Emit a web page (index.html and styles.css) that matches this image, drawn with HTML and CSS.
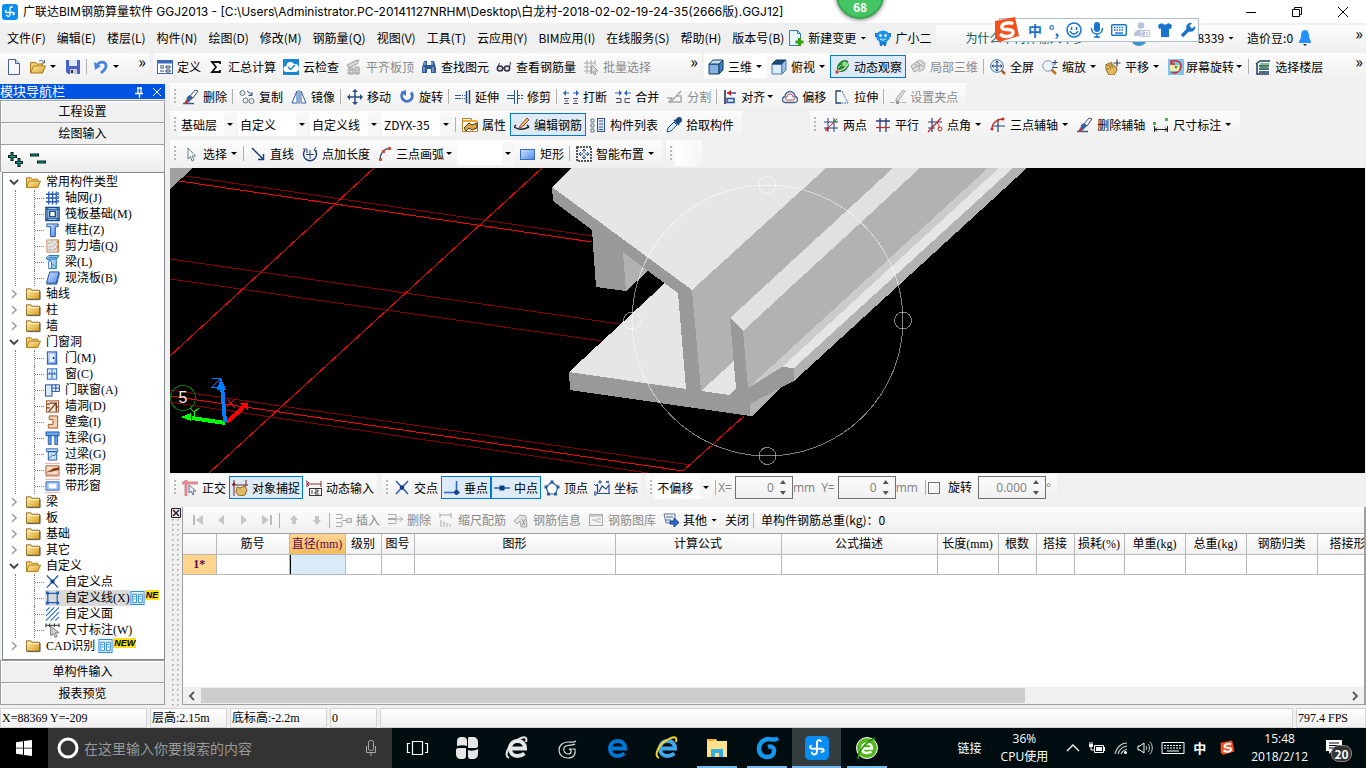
FILE: index.html
```html
<!DOCTYPE html>
<html lang="zh">
<head>
    <meta charset="UTF-8">
    <meta name="viewport" content="width=device-width, initial-scale=1.0">
    <title>广联达BIM钢筋算量软件 GGJ2013</title>
    <link rel="stylesheet" href="styles.css">
</head>
<body>
    <!-- 图标库 -->
    <svg class="sprite" aria-hidden="true">
        <defs>
            <linearGradient id="gold" x1="0" y1="0" x2="1" y2="1"><stop offset="0" stop-color="#fff3b0"/><stop offset="1" stop-color="#d99a1c"/></linearGradient>
            <linearGradient id="sky" x1="0" y1="0" x2="1" y2="1"><stop offset="0" stop-color="#cfe4ff"/><stop offset="1" stop-color="#4f8ae8"/></linearGradient>
        </defs>
        <symbol id="logo" viewBox="0 0 16 16"><rect width="16" height="16" rx="3" fill="#0a8df0"/><path d="M10.500 4c0-2-2.500-1.500-2.500.5V10c0 3-3.500 3-3.500.5M4.500 6.500c-1.500 0-1.500 2 .5 2h6c2 0 2 2.500-.5 2" fill="none" stroke="#fff" stroke-width="1.300"/></symbol>
        <symbol id="file" viewBox="0 0 16 16"><path d="M2.500.5h7l4 4v11h-11z" fill="#f4f8fd" stroke="#44628c"/><path d="M9.500.5v4h4" fill="#c9dcf2" stroke="#44628c"/></symbol>
        <symbol id="fopen" viewBox="0 0 16 16"><path d="M.5 14V3.500h5l1 1.500h6v2" fill="#f3d06a" stroke="#a87a1c"/><path d="M.5 14l3-7h12l-3 7z" fill="url(#gold)" stroke="#a87a1c"/></symbol>
        <symbol id="fclose" viewBox="0 0 16 16"><path d="M.5 13.500v-11h5l1 1.500h8v9.500z" fill="url(#gold)" stroke="#8a6a20"/><path d="M1 5.500h13" stroke="#fff6c8"/><path d="M1 14h14v-9" fill="none" stroke="#555"/></symbol>
        <symbol id="openarrow" viewBox="0 0 16 16"><use href="#fopen"/><path d="M9 2.500c2-2 4-1 5 1M14.500 1v3h-3" fill="none" stroke="#567"/></symbol>
        <symbol id="save" viewBox="0 0 16 16"><path d="M1 1h14v14H3l-2-2z" fill="#4a62c8"/><path d="M4 1h8v6H4z" fill="#dfe8fa"/><path d="M5 10h7v5H5z" fill="#c9cdd8"/><path d="M6 11h2v3H6z" fill="#334"/></symbol>
        <symbol id="undo" viewBox="0 0 16 16"><path d="M4 6c3-4 9-4 9 1 0 4-3 5-5 7" fill="none" stroke="#4a82dc" stroke-width="2.600"/><path d="M1 3l1 8 6-4z" fill="#4a82dc"/></symbol>
        <symbol id="define" viewBox="0 0 16 16"><rect x=".5" y="1.500" width="15" height="13" fill="#fff" stroke="#3d68b8"/><path d="M1 3h14" stroke="#3d68b8" stroke-width="3"/><path d="M3 7h4M3 9h4M3 12h4M9 7h4v2H9zM9 11h4v2H9z" fill="none" stroke="#33496e"/></symbol>
        <symbol id="sum" viewBox="0 0 16 16"><path d="M12 5V3H4l4 5-4 5h8v-2" fill="none" stroke="#111" stroke-width="1.800"/></symbol>
        <symbol id="cloud" viewBox="0 0 16 16"><rect width="16" height="16" fill="#1787d2"/><path d="M3.500 13a3 3 0 0 1 0-6 4 4 0 0 1 7.500-2 4 4 0 0 1 1.500 8z" fill="#fff"/><path d="M5 8l2.500 2.500L12 6" fill="none" stroke="#1787d2" stroke-width="1.500"/></symbol>
        <symbol id="align-top" viewBox="0 0 16 16"><path d="M1 6l8-4 4-1-2 4-8 4zM3 9h4v6H3zM9 8h4v7H9z" fill="#d8d8d8" stroke="#a0a0a0"/><path d="M1 11h13M1 14h13" stroke="#aaa"/></symbol>
        <symbol id="find" viewBox="0 0 16 16"><path d="M3 2h3v4h4V2h3l2 7v5h-5v-4H6v4H1V9z" fill="#2f5a96"/><path d="M3 8v5M12 8v5M4 3v3M11 3v3" stroke="#b9d3f3"/></symbol>
        <symbol id="glasses" viewBox="0 0 16 16"><ellipse cx="4" cy="9.500" rx="2.700" ry="2.500" fill="#dde" stroke="#334" stroke-width="1.500"/><ellipse cx="11" cy="9.500" rx="2.700" ry="2.500" fill="#dde" stroke="#334" stroke-width="1.500"/><path d="M6.500 9h2M1.500 9l2-5M13.500 9l1-6" stroke="#334" fill="none"/></symbol>
        <symbol id="batch" viewBox="0 0 16 16"><path d="M1 4h12M1 8h9M1 12h8M4 1v14M8 1v14M12 1v6" stroke="#aaa"/><path d="M9 6l6 6h-3l1 3-2 .5-1-3-2 2z" fill="#ddd" stroke="#999"/></symbol>
        <symbol id="cube" viewBox="0 0 16 16"><path d="M1 5h10v10H1z" fill="#7fb2e2" stroke="#163a5e"/><path d="M1 5l4-4h10l-4 4z" fill="#c4e0f8" stroke="#163a5e"/><path d="M11 5l4-4v10l-4 4z" fill="#3f7fbd" stroke="#163a5e"/></symbol>
        <symbol id="cube2" viewBox="0 0 16 16"><path d="M1 5h10v10H1z" fill="#dcebf8" stroke="#4676a8"/><path d="M1 5l4-4h10l-4 4z" fill="#1c4d80" stroke="#163a5e"/><path d="M11 5l4-4v10l-4 4z" fill="#9fc5e8" stroke="#4676a8"/></symbol>
        <symbol id="orbit" viewBox="0 0 16 16"><ellipse cx="9" cy="7" rx="7" ry="5" transform="rotate(-45 9 7)" fill="#23863a"/><path d="M0 10c5 4 13 0 15-8" fill="none" stroke="#e6d9c8" stroke-width="1.200"/><circle cx="10.500" cy="5" r="2.500" fill="#8fdc86"/><path d="M4 9l3-3" stroke="#bdf0b4"/><circle cx="3" cy="13" r="1.800" fill="#c64a3a"/></symbol>
        <symbol id="local3d" viewBox="0 0 16 16"><path d="M1 7l5-4 4 2-1 6-5 2zM6 3l4-2 5 3-1 6-5 3M2 10l8-4 5 2M4 5l5 2 4-3" fill="#ddd" stroke="#aaa"/></symbol>
        <symbol id="full" viewBox="0 0 16 16"><circle cx="7" cy="7" r="6.300" fill="#e6f0fb" stroke="#466da0"/><path d="M7 2v10M2 7h10M5.500 3.500L7 2l1.500 1.500M5.500 10.500L7 12l1.500-1.500M3.500 5.500L2 7l1.500 1.500M10.500 5.500L12 7l-1.500 1.500" fill="none" stroke="#1b3f7c"/><path d="M11.500 11.500L15 15" stroke="#a1602c" stroke-width="2.500"/></symbol>
        <symbol id="zoomi" viewBox="0 0 16 16"><circle cx="6" cy="7" r="5.300" fill="#eef4fb" stroke="#8898ac"/><path d="M9.500 10.500L14 15" stroke="#b5762e" stroke-width="2.500"/><path d="M13 1v5M10.500 3.500h5M10.500 8.500h5" stroke="#1b3f7c"/></symbol>
        <symbol id="pan" viewBox="0 0 16 16"><path d="M1 5l2 2V4l2 1 1-2 2 3 3 2 1 3-3 5H4l-3-5z" fill="#e2b860" stroke="#93702a"/><path d="M4 6l2 4M6 5l2 4M2 9l2 2" stroke="#93702a"/><path d="M12 .5v7M8.500 4h7" stroke="#345" stroke-width="1.200"/></symbol>
        <symbol id="screenrot" viewBox="0 0 16 16"><rect width="16" height="16" fill="#76c6ee"/><path d="M2 6h9v6H2z" fill="#f3eda3"/><path d="M3 4c3-4 11-2 10 4s-7 7-10 5M3 1v4h4" fill="none" stroke="#d8232e" stroke-width="1.400"/><circle cx="8" cy="8" r="1.500" fill="#46a546"/></symbol>
        <symbol id="floors" viewBox="0 0 16 16"><path d="M1 5l4-3h10M4 7h10M4 10h10M4 13h10M2 5v10h12" fill="none" stroke="#1d3e5c" stroke-width="1.500"/><path d="M5 5h9M5 8.500h8" stroke="#55b060" stroke-width="1.500"/></symbol>
        <symbol id="erase" viewBox="0 0 16 16"><path d="M0 14.500h11" stroke="#38618f" stroke-width="1.500"/><path d="M12 1l3 1-5 7-3-2z" fill="#f4f4f8" stroke="#3b5478"/><path d="M4 8l3-2 3 3-4 4H3z" fill="#376398"/><path d="M3 11l3 2-2 1.500H1z" fill="#c23b3b"/></symbol>
        <symbol id="copy" viewBox="0 0 16 16"><circle cx="3.500" cy="4" r="2.500" fill="#eee" stroke="#678"/><circle cx="6.500" cy="11.500" r="2.500" fill="#eee" stroke="#678"/><circle cx="12.500" cy="12" r="2.500" fill="#eee" stroke="#678"/><path d="M8 2l5 4M13 3v3.500H9.500" stroke="#2a4f90" fill="none"/></symbol>
        <symbol id="mirror" viewBox="0 0 16 16"><path d="M6 2v12H1zM10 2v12h5z" fill="#fff" stroke="#2e5fa8"/><path d="M8 1v14" stroke="#2e5fa8"/></symbol>
        <symbol id="move" viewBox="0 0 16 16"><path d="M8 1v14M1 8h14" stroke="#2b4c7e" stroke-width="1.500"/><path d="M8 0l3 3H5zM8 16l3-3H5zM0 8l3-3v6zM16 8l-3-3v6z" fill="#2b4c7e"/></symbol>
        <symbol id="rotate" viewBox="0 0 16 16"><path d="M4 3.500a5.300 5.300 0 1 0 8 0" fill="none" stroke="#3f72c8" stroke-width="2.800"/><path d="M7 1v6L1.500 3z" fill="#3f72c8"/></symbol>
        <symbol id="extend" viewBox="0 0 16 16"><path d="M0 6.500h10M0 9.500h10" stroke="#2a56a0" stroke-dasharray="6 1 1 1"/><path d="M11.500 2v12M14.500 1v14" stroke="#27456e" stroke-width="1.500"/></symbol>
        <symbol id="trim" viewBox="0 0 16 16"><path d="M0 6.500h7M0 9.500h7M7.500 1v14M10.500 1v14" stroke="#27568e"/><path d="M11 6.500h5M11 9.500h5" stroke="#27568e" stroke-dasharray="2 1"/></symbol>
        <symbol id="break" viewBox="0 0 16 16"><path d="M1 4h5M10 4h5" stroke="#2d65bd"/><path d="M0 4l3-3v6zM16 4l-3-3v6z" fill="#2d65bd"/><path d="M1 9.500h5M10 9.500h5M1 14.500h5M10 14.500h5M2 12h3M11 12h3" fill="none" stroke="#446"/></symbol>
        <symbol id="merge" viewBox="0 0 16 16"><path d="M0 4h5M11 4h5" stroke="#2d65bd"/><path d="M7 4L4 1v6zM9 4l3-3v6z" fill="#2d65bd"/><path d="M1 9.500h5v4H1M15 9.500h-5v4h5" fill="none" stroke="#446"/></symbol>
        <symbol id="split" viewBox="0 0 16 16"><path d="M0 9h5l-3 4h12V7h-4M3 14l11-12" fill="none" stroke="#aaa" stroke-width="1.500"/></symbol>
        <symbol id="alignl" viewBox="0 0 16 16"><path d="M2 1v14" stroke="#224" stroke-width="1.500"/><path d="M4 4h9" stroke="#2453c2" stroke-width="1.500"/><path d="M4 4l4-3v6z" fill="#c6222e"/><path d="M4 9.500h7v4H4z" fill="#dce6f7" stroke="#2453a2" stroke-width="1.500"/></symbol>
        <symbol id="offset" viewBox="0 0 16 16"><path d="M4 13.500a3 3 0 0 1-1-6 5 5 0 0 1 10 0 3 3 0 0 1-1 6z" fill="#e8eef6" stroke="#41618c" stroke-width="1.300"/><path d="M5 11a1.500 1.500 0 0 1 0-3 3 3 0 0 1 6 0 1.500 1.500 0 0 1 0 3z" fill="#fff" stroke="#ce4c4c"/></symbol>
        <symbol id="stretch" viewBox="0 0 16 16"><path d="M7 2H2v12h5" fill="none" stroke="#26456e" stroke-width="1.300"/><path d="M8 2l6 12H6" fill="none" stroke="#3a67b0" stroke-dasharray="2 1"/></symbol>
        <symbol id="grip" viewBox="0 0 16 16"><path d="M0 13.500h16" stroke="#aaa" stroke-dasharray="5 1"/><path d="M6 10l7-9 2 1-6 9-3 1z" fill="#ddd" stroke="#aaa"/><path d="M6 12h3v3H6z" fill="#999"/></symbol>
        <symbol id="prop" viewBox="0 0 16 16"><path d="M.5 1.500h9v3h6v10H.5z" fill="#fff" stroke="#b08030"/><path d="M1 4h14" stroke="#eba93a" stroke-width="2"/><path d="M2 11l5-5 3 2 5-2v5l-5 2-3-2-3 3z" fill="#dca744" stroke="#44320f"/></symbol>
        <symbol id="editbar" viewBox="0 0 16 16"><path d="M0 10l2-2M0 10c4 3 9 3 15 0M15 10l-2-2" fill="none" stroke="#222" stroke-width="1.400"/><path d="M6 9l7-8 2 2-7 7-3 1z" fill="#f0c060" stroke="#a44"/></symbol>
        <symbol id="complist" viewBox="0 0 16 16"><path d="M1 2h3v3H1zM1 7h3v3H1zM1 12h3v3H1z" fill="#fff" stroke="#577"/><rect x="7.500" y="1.500" width="7" height="13" fill="#e8f0fb" stroke="#2a4f8f"/><path d="M9 4h4M9 7h4M9 10h4M9 12.500h4" stroke="#2a4f8f"/></symbol>
        <symbol id="picker" viewBox="0 0 16 16"><path d="M1 15l1-4 6-6 3 3-6 6z" fill="#d5e8fb" stroke="#254f88"/><path d="M8 3l5 5M9 4l3-3c2-1 4 1 3 3l-3 3z" fill="#1e477e" stroke="#1e477e" stroke-width="1.500"/></symbol>
        <symbol id="axis2" viewBox="0 0 16 16"><path d="M5 1v14M11 1v14M1 5h14M1 11h14" stroke="#283c80"/><path d="M2 14L14 2" stroke="#c02828"/><circle cx="4" cy="12" r="1.500" fill="#c02828"/><circle cx="12" cy="4" r="1.500" fill="#38a038"/></symbol>
        <symbol id="axisp" viewBox="0 0 16 16"><path d="M5 1v14M11 1v14M1 4h14" stroke="#283c80" stroke-width="1.300"/><path d="M1 10.500h14" stroke="#c03030" stroke-width="1.300"/></symbol>
        <symbol id="axisa" viewBox="0 0 16 16"><path d="M5 1v14M1 5h14M1 11h7" stroke="#283c80" stroke-width="1.200"/><path d="M1 15L14 1" stroke="#c02828" stroke-width="1.200"/><path d="M10 6c3 2 2 5 1 6" fill="none" stroke="#c02828"/><circle cx="13" cy="12" r="2" fill="none" stroke="#c02828"/></symbol>
        <symbol id="axis3" viewBox="0 0 16 16"><path d="M8 2v13M2 9h13" stroke="#283c80" stroke-width="1.200"/><path d="M2 12C2 6 7 2 13 2" fill="none" stroke="#c02828" stroke-width="1.300"/><circle cx="2" cy="12" r="1.500" fill="#c02828"/><circle cx="13" cy="2" r="1.500" fill="#c02828"/></symbol>
        <symbol id="dim" viewBox="0 0 16 16"><path d="M1.500 9v6M14.500 9v6M2 12.500h12M4 10.500l-2 2 2 2M12 10.500l2 2-2 2" fill="none" stroke="#222"/><path d="M0 5h3v3H0zM12 1h3v3h-3z" fill="#49b358"/></symbol>
        <symbol id="cursor" viewBox="0 0 16 16"><path d="M5 2v11l2.500-2.500L9 15l2-1-2-4h3.500z" fill="#fff" stroke="#68788c"/></symbol>
        <symbol id="line" viewBox="0 0 16 16"><path d="M2 2l11 11M13.500 8v5.500H8" fill="none" stroke="#1f3f7c" stroke-width="1.500"/></symbol>
        <symbol id="ptlen" viewBox="0 0 16 16"><path d="M3 4a6.500 6.500 0 1 0 10 0" fill="none" stroke="#25467c" stroke-width="1.500"/><path d="M8 4v9M4 8.500h8M1 3h4v4M14 1l-2 3 3 1" fill="none" stroke="#25467c"/></symbol>
        <symbol id="arc3" viewBox="0 0 16 16"><path d="M2 14C2 7 6 3 12 2" fill="none" stroke="#34558c" stroke-width="1.400"/><path d="M1 12h3v3H1zM4 4h3v3H4zM10 1h3v3h-3z" fill="#d0503c"/></symbol>
        <symbol id="rect" viewBox="0 0 16 16"><rect x=".5" y="3.500" width="14" height="10" fill="url(#sky)" stroke="#3b6cc0"/></symbol>
        <symbol id="smart" viewBox="0 0 16 16"><rect x="1" y="1" width="14" height="14" fill="none" stroke="#222" stroke-width="1.500" stroke-dasharray="2 1"/><path d="M8 3v4M8 9v4M3 8h4M9 8h4M6 5l2-2 2 2M6 11l2 2 2-2M5 6L3 8l2 2M11 6l2 2-2 2" fill="none" stroke="#29508c"/></symbol>
        <symbol id="ortho" viewBox="0 0 16 16"><path d="M0 3h16M4 0v16" stroke="#dc8c90" stroke-width="3"/><path d="M7 5v8l2-2 2 4 1-1-1-3h3z" fill="#eef" stroke="#678"/></symbol>
        <symbol id="snap" viewBox="0 0 16 16"><path d="M2 0v16M0 5h16M14 0v6" stroke="#722" /><path d="M0 5l2-3 2 3z" fill="#722"/><path d="M5 7l3 1 5-2 2 4-2 5-6 1-3-4z" fill="#e0bb60" stroke="#8a6c28"/></symbol>
        <symbol id="dyn" viewBox="0 0 16 16"><path d="M0 1h1v6M15 1v6M1 4h14M3 2L1 4l2 2" fill="none" stroke="#8a3030"/><rect x="3.500" y="8.500" width="12" height="7" fill="#fff" stroke="#333"/><path d="M6 10v4M9 10h3v2H9v2h4" fill="none" stroke="#333"/></symbol>
        <symbol id="cross" viewBox="0 0 16 16"><path d="M2 1l12 13M14 1L2 14" stroke="#2b5ca8" stroke-width="1.500"/><circle cx="8" cy="7.500" r="2.200" fill="#123f80"/></symbol>
        <symbol id="perp" viewBox="0 0 16 16"><path d="M0 12.500h16M12.500 1v12" stroke="#2b66c0" stroke-width="1.600"/><circle cx="12.500" cy="12.500" r="2.400" fill="#123f80"/></symbol>
        <symbol id="mid" viewBox="0 0 16 16"><path d="M0 8h16" stroke="#2b66c0" stroke-width="1.600"/><rect x="5.500" y="5.500" width="5" height="5" fill="#123f80"/></symbol>
        <symbol id="vertex" viewBox="0 0 16 16"><path d="M8 2l6 5-2.500 7h-7L2 7z" fill="#fff" stroke="#2b5ca8" stroke-width="1.200"/><path d="M6.500.5h3v3h-3zM.5 5.500h3v3h-3zM12.500 5.500h3v3h-3zM3 12.500h3v3H3zM10 12.500h3v3h-3z" fill="#2b5ca8"/></symbol>
        <symbol id="coord" viewBox="0 0 16 16"><path d="M3.500 4v9.500H16M5 12l3-6 4 3 3-4v9" fill="none" stroke="#2b4c8c" stroke-width="1.200"/><path d="M0 4l2 2 1-2M12 1l3 2M15 1l-3 2M0 12h2v3H0zM5 1h2v2H5z" fill="none" stroke="#2b4c8c"/></symbol>
        <symbol id="nfirst" viewBox="0 0 16 16"><path d="M4 3v10" stroke="#bbb" stroke-width="2"/><path d="M13 3v10L6 8z" fill="#c6c6c6"/></symbol>
        <symbol id="nprev" viewBox="0 0 16 16"><path d="M11 3v10L5 8z" fill="#c6c6c6"/></symbol>
        <symbol id="nnext" viewBox="0 0 16 16"><path d="M5 3v10l6-5z" fill="#c6c6c6"/></symbol>
        <symbol id="nlast" viewBox="0 0 16 16"><path d="M12 3v10" stroke="#bbb" stroke-width="2"/><path d="M3 3v10l7-5z" fill="#c6c6c6"/></symbol>
        <symbol id="nup" viewBox="0 0 16 16"><path d="M8 3l4 5h-2v4H6V8H4z" fill="#c6c6c6"/></symbol>
        <symbol id="ndown" viewBox="0 0 16 16"><path d="M8 13l4-5h-2V4H6v4H4z" fill="#c6c6c6"/></symbol>
        <symbol id="ins" viewBox="0 0 16 16"><path d="M0 2.500h6v4H0M0 10.500h6v4H0M6 8.500h4" fill="none" stroke="#aaa"/><path d="M10.500 6.500h5v4h-5z" fill="#ddd" stroke="#aaa"/></symbol>
        <symbol id="del" viewBox="0 0 16 16"><path d="M1 2.500h8v4H1M1 11.500h8v-4H1M9 7h7M13 4.500L15.500 7 13 9.500" fill="none" stroke="#aaa"/></symbol>
        <symbol id="scale" viewBox="0 0 16 16"><path d="M2 3h11M2 1v5M13 1v5M3 8v7M6 9v6M9 11v4M12 12v3" stroke="#aaa"/></symbol>
        <symbol id="binfo" viewBox="0 0 16 16"><path d="M1 9l6-6 6 1 1 11H8l-1-6-3 3z" fill="#e2e2e2" stroke="#aaa"/><path d="M9 7l3 6M12 7l-3 7" stroke="#999"/></symbol>
        <symbol id="blib" viewBox="0 0 16 16"><rect x="1.500" y="2.500" width="13" height="11" fill="#f3f3f3" stroke="#aaa"/><path d="M2 4h12M4 8h4v2M9 7h4M9 10h4" fill="none" stroke="#aaa"/></symbol>
        <symbol id="other" viewBox="0 0 16 16"><path d="M1 2h11v9H3z" fill="#eef3fb" stroke="#666f90"/><path d="M3 5h7M3 8h5" stroke="#48639c"/><path d="M7 9h4V6l5 4.500L11 15v-3H7z" fill="#2b66c8" stroke="#1b4080"/></symbol>
        <symbol id="newdoc" viewBox="0 0 16 16"><path d="M1.500.5h8l3 3v12h-11z" fill="#e6f5fd" stroke="#2f7fb0"/><path d="M9.500.5v3h3" fill="none" stroke="#2f7fb0"/><path d="M11.500 8v8M7.500 12h8" stroke="#3a9d12" stroke-width="3"/></symbol>
        <symbol id="robot" viewBox="0 0 16 16"><path d="M0 3h3v4H0zM13 3h3v4h-3zM4 10h8l-1 6H9l-1-2-1 2H5z" fill="#1677c8"/><ellipse cx="8" cy="6.500" rx="7" ry="6" fill="#1e95ea"/><circle cx="5.500" cy="5.500" r="1.300" fill="#fff"/><circle cx="10.500" cy="5.500" r="1.300" fill="#fff"/><path d="M5 8.500c2 2 4 2 6 0" fill="none" stroke="#fff"/></symbol>
        <symbol id="bell" viewBox="0 0 16 16"><path d="M8 0c-3 0-4 3-4 6 0 3-2 4-2 7h12c0-3-2-4-2-7 0-3-1-6-4-6z" fill="#2191fb"/><path d="M6 14h4l-2 2z" fill="#222"/></symbol>
        <symbol id="sogou" viewBox="0 0 28 28"><path d="M3 5l20-4 4 19-20 6-4-4z" fill="#f4511e"/><path d="M21 8c-4-3-13 0-11 4 1 3 11 0 11 4 0 5-9 6-13 2" fill="none" stroke="#fff" stroke-width="3.500"/></symbol>
        <symbol id="mic" viewBox="0 0 16 16"><rect x="5" y="0" width="6" height="10" rx="3" fill="#1a73cc"/><path d="M2.500 6c0 8 11 8 11 0M8 12v4M5 15h6" fill="none" stroke="#1a73cc" stroke-width="1.500"/></symbol>
        <symbol id="smile" viewBox="0 0 16 16"><circle cx="8" cy="8" r="7" fill="none" stroke="#1a73cc" stroke-width="1.600"/><path d="M5.500 5v3M10.500 5v3M4 9c2 4 6 4 8 0" fill="none" stroke="#1a73cc" stroke-width="1.500"/></symbol>
        <symbol id="kbd" viewBox="0 0 16 16"><rect x=".7" y="2.700" width="14.600" height="10.600" rx="1" fill="none" stroke="#1a73cc" stroke-width="1.400"/><path d="M3 5.500h10M3 8h10" stroke="#1a73cc" stroke-width="1.500" stroke-dasharray="1.500 1"/><path d="M4 11h8" stroke="#1a73cc" stroke-width="1.400"/></symbol>
        <symbol id="person" viewBox="0 0 16 16"><circle cx="7" cy="3.500" r="3.300" fill="#b9c4da"/><path d="M0 14c0-4 2-6 5-6h4v6z" fill="#b9c4da"/><path d="M6.500 8.500h9v6h-9z" fill="#fff" stroke="#b9c4da"/><path d="M8 10h2.500v1.500H8V13h3M13 10v3.500" fill="none" stroke="#9aabc8"/></symbol>
        <symbol id="shirt" viewBox="0 0 16 16"><path d="M1 3l4-2c1 2 5 2 6 0l4 2-1 4-2-.5V15H4V6.500L2 7z" fill="#1a73cc"/></symbol>
        <symbol id="wrench" viewBox="0 0 16 16"><path d="M2 14l7-7" stroke="#1a73cc" stroke-width="3.500"/><path d="M12 1a4.500 4.500 0 1 0 3 3l-3 2.500-2.500-2.500z" fill="#1a73cc"/></symbol>
        <!-- 构件树图标 -->
        <symbol id="t-axis" viewBox="0 0 16 16"><path d="M4 1v14M8 1v14M12 1v14M1 4h11M1 8h11M1 12h11" stroke="#2458b8" stroke-width="1.400"/><path d="M12.500 2.500h2v2h-2zM12.500 6.500h2v2h-2zM12.500 10.500h2v2h-2z" fill="#fff" stroke="#2458b8"/></symbol>
        <symbol id="t-raft" viewBox="0 0 16 16"><rect x="1" y="1" width="14" height="14" fill="#dce8f8" stroke="#0c4a94" stroke-width="1.500"/><rect x="5" y="5" width="6" height="6" fill="#fff" stroke="#0c4a94" stroke-width="1.500"/><path d="M3 1v14M13 1v14M1 3h14M1 13h14" stroke="#0c4a94"/></symbol>
        <symbol id="t-col" viewBox="0 0 16 16"><path d="M2 1.500h12v3h-3V15H6V4.500H2z" fill="url(#sky)" stroke="#1d4f9c"/></symbol>
        <symbol id="t-wall" viewBox="0 0 16 16"><path d="M2 1.500h12v13H2z" fill="#e8e4e2" stroke="#c98a64"/><path d="M4 5h1M7 4h1M10 6h1M5 9h1M8 8h1M11 11h1M6 12h1M4 12h1M9 12h1" stroke="#666"/><path d="M14 1v14M12 4h3M12 9h3" stroke="#d06a1c"/></symbol>
        <symbol id="t-beam" viewBox="0 0 16 16"><path d="M1 4l3-3h11l-3 4v10H7V8z" fill="#a8d4f6" stroke="#1a6cb4"/><path d="M2 5h9l3-3M8 10l4 4M4 7v8h3M4 3h8" fill="none" stroke="#1a6cb4"/></symbol>
        <symbol id="t-slab" viewBox="0 0 16 16"><path d="M5 1.500h10l-3 12H1.500z" fill="url(#sky)" stroke="#1b4b94"/><path d="M1.500 14.500h11l3-12" fill="none" stroke="#1b4b94"/></symbol>
        <symbol id="t-door" viewBox="0 0 16 16"><rect x="2.500" y="1.500" width="10" height="13" fill="url(#sky)" stroke="#1d4ba0"/><rect x="5" y="3.500" width="5" height="9" fill="#e9f2ff"/><path d="M9 7v2" stroke="#123" stroke-width="1.500"/></symbol>
        <symbol id="t-win" viewBox="0 0 16 16"><rect x="2.500" y="2.500" width="10" height="11" fill="#dcebff" stroke="#1d5fc0"/><path d="M7.500 3v10M3 8h9M5 6v2M10 6v2" stroke="#1d5fc0"/></symbol>
        <symbol id="t-dw" viewBox="0 0 16 16"><rect x=".5" y="2.500" width="7" height="12" fill="#dbe8fb" stroke="#1d4ba0"/><path d="M7.500 2.500h8v7h-8zM11.500 2v7M8 6h7" fill="#e6f0ff" stroke="#1d4ba0"/></symbol>
        <symbol id="t-hole" viewBox="0 0 16 16"><rect x="1.500" y="2.500" width="13" height="12" fill="#f6e6da" stroke="#98512a"/><path d="M5 5h7v9M12 5l-8 9M2 6h3M12 9h2M2 10h3" fill="none" stroke="#6d3312" stroke-width="1.300"/></symbol>
        <symbol id="t-niche" viewBox="0 0 16 16"><path d="M4.500 1.500h9v13h-10v-4h5v-5h-4z" fill="#f1cfb3" stroke="#a55018"/></symbol>
        <symbol id="t-lbeam" viewBox="0 0 16 16"><path d="M1 1.500h14v4H1zM3.500 6h3v9h-3zM10.500 6h3v9h-3z" fill="#69a5ed" stroke="#235cab"/></symbol>
        <symbol id="t-lintel" viewBox="0 0 16 16"><path d="M1.500 2.500h12v3H1.500zM3.500 5.500h9v9h-9z" fill="#d0e4fb" stroke="#1d5baa"/><path d="M4 13l4-4 2 1 2-3" fill="none" stroke="#1d5baa"/></symbol>
        <symbol id="t-striph" viewBox="0 0 16 16"><path d="M1 3.500h14v10H1z" fill="#f4dccb" stroke="#a9592b"/><path d="M1 11l8-5 6-1v3z" fill="#8c3c12"/><path d="M0 1h16M0 15h16" stroke="#f3a7a0"/></symbol>
        <symbol id="t-stripw" viewBox="0 0 16 16"><path d="M1 3.500h14v9H1z" fill="#9fc3f6" stroke="#3a68b8"/><path d="M4 5.500h8v5H4z" fill="#fff"/><path d="M0 1h16M0 15h16" stroke="#f3a7a0"/></symbol>
        <symbol id="t-line" viewBox="0 0 16 16"><path d="M3 3h10v10H3z" fill="none" stroke="#1c5cb4" stroke-width="1.300"/><path d="M1 1h3v3H1zM12 1h3v3h-3zM1 12h3v3H1zM12 12h3v3h-3z" fill="#1c5cb4"/></symbol>
        <symbol id="t-area" viewBox="0 0 16 16"><path d="M1 5l4-4M1 10l9-9M1 15L15 1M6 15l9-9M11 15l4-4" stroke="#2a6cd0" stroke-width="1.200"/></symbol>
        <symbol id="t-dim" viewBox="0 0 16 16"><path d="M1 1v4M15 1v4M1 3h14M5 1v4M10 1v4" stroke="#222"/><path d="M6 4v10l3-2 2 4 2-1-2-4h4z" fill="#ccc" stroke="#777"/></symbol>
        <symbol id="video" viewBox="0 0 16 16"><rect x="1" y="1" width="14" height="14" fill="#eaf4fe" stroke="#1d83d8"/><path d="M3 4h4v9H3zM9 4h4v9H9z" fill="#fff" stroke="#1d83d8"/><path d="M4 6.500h2M4 9h2M10 6.500h2M10 9h2" stroke="#1d83d8"/></symbol>
        <symbol id="down" viewBox="0 0 10 10"><path d="M1 3l4 4 4-4" fill="none" stroke="#404040" stroke-width="1.800"/></symbol>
        <symbol id="right" viewBox="0 0 10 10"><path d="M3 1l4 4-4 4" fill="none" stroke="#a0a0a0" stroke-width="1.600"/></symbol>
        <!-- 任务栏图标 -->
        <symbol id="b-fan" viewBox="0 0 24 24"><path d="M6 1h2c3 0 4 2 4 4v5c-3-1-6-1-10 0V5c0-3 2-4 4-4zM14 1h4c3 0 5 2 5 5v4c0 1-1 2-2 2h-8V4c0-2 0-3 1-3zM3 12h8v8c0 2-1 3-3 3H6c-3 0-5-2-5-5v-4c0-1 1-2 2-2zM13 14c3 1 6 1 10-1v5c0 3-2 5-5 5h-2c-3 0-3-2-3-4z" fill="#e6e6e6"/></symbol>
        <symbol id="b-e" viewBox="0 0 24 24"><path d="M5 12.500h15c0-5-3-7.500-7.500-7.500S5 8 5 12.500 8 20 12.500 20c3 0 5-1 7-2.500" fill="none" stroke="currentColor" stroke-width="4"/></symbol>
        <symbol id="b-ring" viewBox="0 0 24 24"><path d="M4 22C-2 20 4 8 12 4c5-3 11-5 9 2" fill="none" stroke="currentColor" stroke-width="2"/></symbol>
        <symbol id="b-g" viewBox="0 0 24 24"><path d="M23 2c-3 3-6 1-10 1-6 1-9 5-9 10s4 8 8 8c5 0 7-3 7-6 0-4-3-5-6-4" fill="none" stroke="#1598ee" stroke-width="4.500"/></symbol>
        <symbol id="b-gline" viewBox="0 0 24 24"><path d="M21 5c-2 2-5 1-8 1-6 0-9 4-9 8 0 5 4 8 9 8 6 0 8-4 7-9h-6c3 1 3 5-1 5-3 0-5-3-4-6 1-4 9-2 11-4" fill="none" stroke="#d8d8d8" stroke-width="1.200"/></symbol>
        <symbol id="b-folder" viewBox="0 0 24 24"><path d="M2 3h9l1 2h10v16H2z" fill="#fde08a"/><path d="M3 3h7v2H3z" fill="#f2b51d"/><path d="M6 21v-8h12v8h-4v-4h-4v4z" fill="#33aee8"/></symbol>
    </svg>

    <div class="app">
        <header class="titlebar">
            <svg class="i"><use href="#logo"/></svg>
            <h1>广联达BIM钢筋算量软件 GGJ2013 - [C:\Users\Administrator.PC-20141127NRHM\Desktop\白龙村-2018-02-02-19-24-35(2666版).GGJ12]</h1>
            <div class="win-buttons">
                <button aria-label="最小化"><svg class="i" viewBox="0 0 16 16"><path d="M3 8.500h10" stroke="#000"/></svg></button>
                <button aria-label="还原"><svg class="i" viewBox="0 0 16 16"><path d="M3.500 5.500h7v7h-7zM5.500 5V3.500h7v7H11" fill="none" stroke="#000"/></svg></button>
                <button aria-label="关闭"><svg class="i" viewBox="0 0 16 16"><path d="M3 3l10 10M13 3L3 13" stroke="#000"/></svg></button>
            </div>
            <div class="ball">68</div>
        </header>

        <div class="menu-row">
            <nav class="menu">
                <a href="#">文件(F)</a><a href="#">编辑(E)</a><a href="#">楼层(L)</a><a href="#">构件(N)</a><a href="#">绘图(D)</a><a href="#">修改(M)</a><a href="#">钢筋量(Q)</a><a href="#">视图(V)</a><a href="#">工具(T)</a><a href="#">云应用(Y)</a><a href="#">BIM应用(I)</a><a href="#">在线服务(S)</a><a href="#">帮助(H)</a><a href="#">版本号(B)</a>
            </nav>
            <button class="tb"><svg class="i"><use href="#newdoc"/></svg>新建变更<i class="caret"></i></button>
            <button class="tb"><svg class="i"><use href="#robot"/></svg>广小二</button>
            <div class="account bar">
                <a class="tip" href="#">为什么甲构件输入不多</a>
                <svg class="i avatar" viewBox="0 0 16 16"><circle cx="8" cy="8" r="8" fill="#3c94cc"/></svg>
                <button class="tb user">8339<i class="caret"></i></button>
                <button class="tb">造价豆:0</button>
                <svg class="i"><use href="#bell"/></svg>
                <span class="more">»</span>
            </div>
            <div class="ime">
                <svg class="ime-logo"><use href="#sogou"/></svg>
                <b>中</b><b>°,</b>
                <svg class="i"><use href="#smile"/></svg>
                <svg class="i"><use href="#mic"/></svg>
                <svg class="i"><use href="#kbd"/></svg>
                <svg class="i"><use href="#person"/></svg>
                <svg class="i"><use href="#shirt"/></svg>
                <svg class="i"><use href="#wrench"/></svg>
            </div>
        </div>

        <div class="top-tools">
            <div class="bar std">
                <button class="tb" aria-label="新建"><svg class="i"><use href="#file"/></svg></button>
                <button class="tb" aria-label="打开"><svg class="i"><use href="#openarrow"/></svg><i class="caret"></i></button>
                <button class="tb" aria-label="保存"><svg class="i"><use href="#save"/></svg></button>
                <i class="sep"></i>
                <button class="tb" aria-label="撤销"><svg class="i"><use href="#undo"/></svg><i class="caret"></i></button>
                <span class="more">»</span>
            </div>
            <div class="bar calc">
                <button class="tb"><svg class="i"><use href="#define"/></svg>定义</button>
                <button class="tb"><svg class="i"><use href="#sum"/></svg>汇总计算</button>
                <button class="tb"><svg class="i"><use href="#cloud"/></svg>云检查</button>
                <button class="tb" disabled><svg class="i"><use href="#align-top"/></svg>平齐板顶</button>
                <button class="tb"><svg class="i"><use href="#find"/></svg>查找图元</button>
                <button class="tb"><svg class="i"><use href="#glasses"/></svg>查看钢筋量</button>
                <button class="tb" disabled><svg class="i"><use href="#batch"/></svg>批量选择</button>
                <span class="more">»</span>
            </div>
            <div class="bar view">
                <button class="tb white"><svg class="i"><use href="#cube"/></svg>三维<i class="caret"></i></button>
                <button class="tb"><svg class="i"><use href="#cube2"/></svg>俯视<i class="caret"></i></button>
                <button class="tb on"><svg class="i"><use href="#orbit"/></svg>动态观察</button>
                <button class="tb" disabled><svg class="i"><use href="#local3d"/></svg>局部三维</button>
                <i class="sep"></i>
                <button class="tb"><svg class="i"><use href="#full"/></svg>全屏</button>
                <button class="tb"><svg class="i"><use href="#zoomi"/></svg>缩放<i class="caret"></i></button>
                <button class="tb"><svg class="i"><use href="#pan"/></svg>平移<i class="caret"></i></button>
                <button class="tb near"><svg class="i"><use href="#screenrot"/></svg>屏幕旋转<i class="caret"></i></button>
                <i class="sep"></i>
                <button class="tb"><svg class="i"><use href="#floors"/></svg>选择楼层</button>
                <span class="more">»</span>
            </div>
        </div>

        <div class="main">
            <aside class="dock">
                <h2>模块导航栏
                    <svg class="i" viewBox="0 0 16 16"><path d="M6 4h5M7 4v5M10 4v5M4 9.500h8M8.500 10v4" fill="none" stroke="#fff" stroke-width="1.300"/></svg>
                    <svg class="i" viewBox="0 0 16 16"><path d="M4 4l8 8M12 4l-8 8" stroke="#fff"/></svg>
                </h2>
                <button class="module">工程设置</button>
                <button class="module">绘图输入</button>
                <div class="dock-tools">
                    <svg class="i" viewBox="0 0 16 16"><path d="M5 1v9M1 5.500h9M12 7v9M8 11.500h8" stroke="#00201e" stroke-width="3"/><path d="M5 2v7M2 5.500h7M12 8v7M9 11.500h6" stroke="#1a9a8c"/></svg>
                    <svg class="i" viewBox="0 0 16 16"><path d="M0 4h9M7 11h9" stroke="#00201e" stroke-width="3"/><path d="M1 4h7M8 11h7" stroke="#1a9a8c"/></svg>
                </div>
                <ul class="tree">
                    <li><svg class="arrow"><use href="#down"/></svg><svg class="i"><use href="#fopen"/></svg>常用构件类型
                        <ul>
                            <li><svg class="i"><use href="#t-axis"/></svg>轴网(J)</li>
                            <li><svg class="i"><use href="#t-raft"/></svg>筏板基础(M)</li>
                            <li><svg class="i"><use href="#t-col"/></svg>框柱(Z)</li>
                            <li><svg class="i"><use href="#t-wall"/></svg>剪力墙(Q)</li>
                            <li><svg class="i"><use href="#t-beam"/></svg>梁(L)</li>
                            <li><svg class="i"><use href="#t-slab"/></svg>现浇板(B)</li>
                        </ul>
                    </li>
                    <li><svg class="arrow"><use href="#right"/></svg><svg class="i"><use href="#fclose"/></svg>轴线</li>
                    <li><svg class="arrow"><use href="#right"/></svg><svg class="i"><use href="#fclose"/></svg>柱</li>
                    <li><svg class="arrow"><use href="#right"/></svg><svg class="i"><use href="#fclose"/></svg>墙</li>
                    <li><svg class="arrow"><use href="#down"/></svg><svg class="i"><use href="#fopen"/></svg>门窗洞
                        <ul>
                            <li><svg class="i"><use href="#t-door"/></svg>门(M)</li>
                            <li><svg class="i"><use href="#t-win"/></svg>窗(C)</li>
                            <li><svg class="i"><use href="#t-dw"/></svg>门联窗(A)</li>
                            <li><svg class="i"><use href="#t-hole"/></svg>墙洞(D)</li>
                            <li><svg class="i"><use href="#t-niche"/></svg>壁龛(I)</li>
                            <li><svg class="i"><use href="#t-lbeam"/></svg>连梁(G)</li>
                            <li><svg class="i"><use href="#t-lintel"/></svg>过梁(G)</li>
                            <li><svg class="i"><use href="#t-striph"/></svg>带形洞</li>
                            <li><svg class="i"><use href="#t-stripw"/></svg>带形窗</li>
                        </ul>
                    </li>
                    <li><svg class="arrow"><use href="#right"/></svg><svg class="i"><use href="#fclose"/></svg>梁</li>
                    <li><svg class="arrow"><use href="#right"/></svg><svg class="i"><use href="#fclose"/></svg>板</li>
                    <li><svg class="arrow"><use href="#right"/></svg><svg class="i"><use href="#fclose"/></svg>基础</li>
                    <li><svg class="arrow"><use href="#right"/></svg><svg class="i"><use href="#fclose"/></svg>其它</li>
                    <li><svg class="arrow"><use href="#down"/></svg><svg class="i"><use href="#fopen"/></svg>自定义
                        <ul>
                            <li><svg class="i"><use href="#cross"/></svg>自定义点</li>
                            <li><span class="picked"><svg class="i"><use href="#t-line"/></svg>自定义线(X)</span><svg class="i tight"><use href="#video"/></svg><span class="new">NE</span></li>
                            <li><svg class="i"><use href="#t-area"/></svg>自定义面</li>
                            <li><svg class="i"><use href="#t-dim"/></svg>尺寸标注(W)</li>
                        </ul>
                    </li>
                    <li><svg class="arrow"><use href="#right"/></svg><svg class="i"><use href="#fclose"/></svg>CAD识别 <svg class="i tight"><use href="#video"/></svg><span class="new">NEW</span></li>
                </ul>
                <button class="module">单构件输入</button>
                <button class="module">报表预览</button>
            </aside>

            <section class="work">
                <div class="tool-row">
                    <div class="bar">
                        <i class="handle"></i>
                        <button class="tb"><svg class="i"><use href="#erase"/></svg>删除</button>
                        <i class="sep"></i>
                        <button class="tb"><svg class="i"><use href="#copy"/></svg>复制</button>
                        <button class="tb"><svg class="i"><use href="#mirror"/></svg>镜像</button>
                        <i class="sep"></i>
                        <button class="tb"><svg class="i"><use href="#move"/></svg>移动</button>
                        <button class="tb"><svg class="i"><use href="#rotate"/></svg>旋转</button>
                        <i class="sep"></i>
                        <button class="tb"><svg class="i"><use href="#extend"/></svg>延伸</button>
                        <button class="tb"><svg class="i"><use href="#trim"/></svg>修剪</button>
                        <i class="sep"></i>
                        <button class="tb"><svg class="i"><use href="#break"/></svg>打断</button>
                        <button class="tb"><svg class="i"><use href="#merge"/></svg>合并</button>
                        <button class="tb" disabled><svg class="i"><use href="#split"/></svg>分割</button>
                        <i class="sep"></i>
                        <button class="tb near"><svg class="i"><use href="#alignl"/></svg>对齐<i class="caret"></i></button>
                        <button class="tb"><svg class="i"><use href="#offset"/></svg>偏移</button>
                        <button class="tb"><svg class="i"><use href="#stretch"/></svg>拉伸</button>
                        <i class="sep"></i>
                        <button class="tb" disabled><svg class="i"><use href="#grip"/></svg>设置夹点</button>
                    </div>
                </div>
                <div class="tool-row apart">
                    <div class="bar">
                        <i class="handle"></i>
                        <select class="combo small" aria-label="楼层"><option>基础层</option></select>
                        <select class="combo" aria-label="构件类别"><option>自定义</option></select>
                        <select class="combo" aria-label="构件类型"><option>自定义线</option></select>
                        <select class="combo" aria-label="构件名称"><option>ZDYX-35</option></select>
                        <i class="sep"></i>
                        <button class="tb"><svg class="i"><use href="#prop"/></svg>属性</button>
                        <button class="tb on"><svg class="i"><use href="#editbar"/></svg>编辑钢筋</button>
                        <button class="tb"><svg class="i"><use href="#complist"/></svg>构件列表</button>
                        <button class="tb"><svg class="i"><use href="#picker"/></svg>拾取构件</button>
                    </div>
                    <div class="bar">
                        <i class="handle"></i>
                        <button class="tb"><svg class="i"><use href="#axis2"/></svg>两点</button>
                        <button class="tb"><svg class="i"><use href="#axisp"/></svg>平行</button>
                        <button class="tb"><svg class="i"><use href="#axisa"/></svg>点角<i class="caret"></i></button>
                        <button class="tb"><svg class="i"><use href="#axis3"/></svg>三点辅轴<i class="caret"></i></button>
                        <button class="tb"><svg class="i"><use href="#erase"/></svg>删除辅轴</button>
                        <button class="tb"><svg class="i"><use href="#dim"/></svg>尺寸标注<i class="caret"></i></button>
                    </div>
                </div>
                <div class="tool-row last">
                    <div class="bar">
                        <i class="handle"></i>
                        <button class="tb"><svg class="i"><use href="#cursor"/></svg>选择<i class="caret"></i></button>
                        <i class="sep"></i>
                        <button class="tb"><svg class="i"><use href="#line"/></svg>直线</button>
                        <button class="tb"><svg class="i"><use href="#ptlen"/></svg>点加长度</button>
                        <button class="tb near"><svg class="i"><use href="#arc3"/></svg>三点画弧<i class="caret"></i></button>
                        <select class="combo small" aria-label="画弧参数"><option></option></select>
                        <button class="tb"><svg class="i"><use href="#rect"/></svg>矩形</button>
                        <i class="sep"></i>
                        <button class="tb"><svg class="i"><use href="#smart"/></svg>智能布置<i class="caret"></i></button>
                    </div>
                    <div class="bar stub"><i class="handle"></i><i class="blank"></i></div>
                </div>

                <!-- 三维视图 -->
                <div class="scene">
                    <svg viewBox="0 0 1195 305" preserveAspectRatio="xMidYMid slice" shape-rendering="crispEdges">
                        <path d="M0 0h23L0 21z" fill="#a0a0a0"/>
                        <g stroke="#850000"><path d="M15 8l407 60M0 91l450 65M0 111l432 62M0 222l521 75M0 234l478 71"/></g>
                        <g stroke="#f00"><path d="M9 13l413 61M0 228l513 75M204 0L0 188M372 0L39 305M574 248l-61 55"/></g>
                        <path d="M453 84l25 19-22 20z" fill="#b2b2b2"/>
                        <path d="M399 204l96-89 13 10 8 96z" fill="#e6e6e6"/>
                        <path d="M522 122L656 0h67L560 150l4 43-33 30z" fill="#b2b2b2"/>
                        <path d="M531 223l33-30 2 27-7 7z" fill="#e6e6e6"/>
                        <path d="M573 163L750 0h68L578 220z" fill="#b2b2b2"/>
                        <path d="M578 220L818 0h11L615 197v3z" fill="#cbcbcb"/>
                        <path d="M612 199L829 0h14L624 200z" fill="#e6e6e6"/>
                        <path d="M624 200L843 0h14L624 213zM580 236l32-17-30 29h-2z" fill="#b2b2b2"/>
                        <path d="M560 150l13 13L750 0h-27z" fill="#e1e1e1"/>
                        <path d="M382 19l20-19h254L522 122z" fill="#e6e6e6"/>
                        <path d="M382 19L522 122L531 223L559 227L566 220L560 150L573 163L578 220L612 199L624 200V213L612 219L580 236V248L400 222L399 204L516 221L508 125L478 103L453 84L456 123L426 119L422 62L383 33z" fill="#999"/>
                        <g fill="none" stroke="#fff" stroke-opacity=".5"><circle cx="597.500" cy="152.500" r="135.500"/><circle cx="597.500" cy="17" r="8.500"/><circle cx="597.500" cy="288" r="8.500"/><circle cx="462" cy="152.500" r="8.500"/><circle cx="733" cy="152.500" r="8.500"/></g>
                        <circle cx="13" cy="230" r="12.500" fill="none" stroke="#007800"/>
                        <path d="M55 255l-33-5" stroke="#0f0" stroke-width="4"/><path d="M11 249l10-4v8z" fill="#0f0"/><path d="M20 240l4 4 5-4M24 244v4" fill="none" stroke="#0f0"/>
                        <path d="M57 254l16-14" stroke="#f00" stroke-width="4"/><path d="M70 235h7v6zM57 231l8 9M65 231l-8 8" fill="#f00" stroke="#f00"/>
                        <path d="M55 254l-3-36" stroke="#0080ff" stroke-width="4"/><path d="M47 222l4-12 5 12z" fill="#0080ff"/><path d="M42 210h9l-9 9h8" fill="none" stroke="#0080ff"/>
                        <text x="13" y="235" text-anchor="middle" class="axis-no">5</text>
                    </svg>
                </div>

                <div class="snap">
                    <div class="bar">
                        <i class="handle"></i>
                        <button class="tb"><svg class="i"><use href="#ortho"/></svg>正交</button>
                        <button class="tb on"><svg class="i"><use href="#snap"/></svg>对象捕捉</button>
                        <button class="tb"><svg class="i"><use href="#dyn"/></svg>动态输入</button>
                    </div>
                    <div class="bar">
                        <i class="handle"></i>
                        <button class="tb"><svg class="i"><use href="#cross"/></svg>交点</button>
                        <button class="tb on"><svg class="i"><use href="#perp"/></svg>垂点</button>
                        <button class="tb on"><svg class="i"><use href="#mid"/></svg>中点</button>
                        <button class="tb"><svg class="i"><use href="#vertex"/></svg>顶点</button>
                        <button class="tb"><svg class="i"><use href="#coord"/></svg>坐标</button>
                    </div>
                    <div class="bar">
                        <i class="handle"></i>
                        <select class="combo small" aria-label="偏移方式"><option>不偏移</option></select>
                        <i class="sep"></i>
                        <label class="num">X=<input type="text" value="0" disabled><i class="spin"></i>mm</label>
                        <label class="num">Y=<input type="text" value="0" disabled><i class="spin"></i>mm</label>
                        <i class="sep"></i>
                        <label class="turn"><input type="checkbox">旋转</label>
                        <label class="num"><input class="wide" type="text" value="0.000" aria-label="旋转角度" disabled><i class="spin"></i>°</label>
                    </div>
                </div>

                <div class="rebar">
                    <div class="side-grip"><svg class="close-x" viewBox="0 0 10 10"><path d="M.5.5h9v9h-9z" fill="#f4e6e6" stroke="#223"/><path d="M2 2l6 6M8 2L2 8" stroke="#223" stroke-width="1.500"/></svg></div>
                    <div class="rebar-body">
                        <div class="rebar-tools">
                            <button class="tb" disabled aria-label="首条"><svg class="i"><use href="#nfirst"/></svg></button>
                            <button class="tb" disabled aria-label="上一条"><svg class="i"><use href="#nprev"/></svg></button>
                            <button class="tb" disabled aria-label="下一条"><svg class="i"><use href="#nnext"/></svg></button>
                            <button class="tb" disabled aria-label="末条"><svg class="i"><use href="#nlast"/></svg></button>
                            <i class="sep"></i>
                            <button class="tb" disabled aria-label="上移"><svg class="i"><use href="#nup"/></svg></button>
                            <button class="tb" disabled aria-label="下移"><svg class="i"><use href="#ndown"/></svg></button>
                            <i class="sep"></i>
                            <button class="tb" disabled><svg class="i"><use href="#ins"/></svg>插入</button>
                            <button class="tb" disabled><svg class="i"><use href="#del"/></svg>删除</button>
                            <button class="tb" disabled><svg class="i"><use href="#scale"/></svg>缩尺配筋</button>
                            <button class="tb" disabled><svg class="i"><use href="#binfo"/></svg>钢筋信息</button>
                            <button class="tb" disabled><svg class="i"><use href="#blib"/></svg>钢筋图库</button>
                            <button class="tb"><svg class="i"><use href="#other"/></svg>其他<i class="caret"></i></button>
                            <button class="tb">关闭</button>
                            <i class="sep"></i>
                            <span class="total">单构件钢筋总重(kg)：0</span>
                        </div>
                        <div class="grid">
                            <table>
                                <colgroup><col class="w33"><col class="w73"><col class="w56"><col class="w36"><col class="w33"><col class="w201"><col class="w166"><col class="w156"><col class="w61"><col class="w38"><col class="w38"><col class="w50"><col class="w61"><col class="w61"><col class="w71"><col class="w73"></colgroup>
                                <thead>
                                    <tr><th></th><th>筋号</th><th class="cur">直径(mm)</th><th>级别</th><th>图号</th><th>图形</th><th>计算公式</th><th>公式描述</th><th>长度(mm)</th><th>根数</th><th>搭接</th><th>损耗(%)</th><th>单重(kg)</th><th>总重(kg)</th><th>钢筋归类</th><th>搭接形式</th></tr>
                                </thead>
                                <tbody>
                                    <tr><th>1*</th><td></td><td class="cur"></td><td></td><td></td><td></td><td></td><td></td><td></td><td></td><td></td><td></td><td></td><td></td><td></td><td></td></tr>
                                </tbody>
                            </table>
                        </div>
                        <div class="hscroll">
                            <svg class="arrow" viewBox="0 0 10 10"><path d="M7 1L3 5l4 4" fill="none" stroke="#555" stroke-width="1.800"/></svg>
                            <div class="track"><div class="thumb"></div></div>
                            <svg class="arrow" viewBox="0 0 10 10"><path d="M3 1l4 4-4 4" fill="none" stroke="#555" stroke-width="1.800"/></svg>
                        </div>
                    </div>
                </div>
            </section>
        </div>

        <footer class="status">
            <span class="pos">X=88369 Y=-209</span><span class="floor">层高:2.15m</span><span class="base">底标高:-2.2m</span><span class="count">0</span><span class="msg"></span><span class="fps">797.4 FPS</span>
        </footer>

        <div class="taskbar">
            <button class="start" aria-label="开始"><svg class="i" viewBox="0 0 16 16"><path d="M0 2.300L7 1.300v6.400H0zM8 1.100L16 0v7.700H8zM0 8.500h7v6.300l-7-1zM8 8.500h8V16l-8-1.100z" fill="#fff"/></svg></button>
            <div class="search">
                <svg class="cortana" viewBox="0 0 22 22"><circle cx="11" cy="11" r="9" fill="none" stroke="#fff" stroke-width="3"/></svg>
                <input type="text" placeholder="在这里输入你要搜索的内容" aria-label="搜索">
                <svg class="i" viewBox="0 0 16 16"><rect x="5.500" y=".5" width="5" height="10" rx="2" fill="none" stroke="#aaa"/><path d="M3.500 6v6.500h9V6M8 13v3" fill="none" stroke="#aaa"/></svg>
            </div>
            <div class="apps">
                <button aria-label="任务视图"><svg class="a" viewBox="0 0 24 24"><path d="M7.500 5.500h10v13h-10zM5 7.500H2.500v9H5M20 7.500h2.500v9H20" fill="none" stroke="#fff" stroke-width="1.200"/></svg></button>
                <button aria-label="风扇"><svg class="a"><use href="#b-fan"/></svg></button>
                <button aria-label="浏览器"><svg class="a grey"><use href="#b-e"/><use href="#b-ring"/></svg></button>
                <button aria-label="广联达"><svg class="a"><use href="#b-gline"/></svg></button>
                <button aria-label="Edge"><svg class="a blue"><use href="#b-e"/></svg></button>
                <button aria-label="Internet Explorer"><svg class="a ie"><use href="#b-e"/><use class="gold" href="#b-ring"/></svg></button>
                <button class="run" aria-label="文件资源管理器"><svg class="a"><use href="#b-folder"/></svg></button>
                <button class="run" aria-label="GWS"><svg class="a"><use href="#b-g"/></svg></button>
                <button class="run active" aria-label="GGJ2013"><svg class="a"><use href="#logo"/></svg></button>
                <button class="run" aria-label="360浏览器"><svg class="a green" viewBox="0 0 24 24"><circle cx="12" cy="12" r="10.500" fill="#54b81f" stroke="#fff"/><path d="M7 12.500h10c0-3-2-5-5-5s-5 2-5 5 2 4.500 5 4.500c2 0 3-.5 4.500-1.500" fill="none" stroke="#fff" stroke-width="2.500"/><path d="M3 23c0-8 8-17 17-21" fill="none" stroke="#2d8a12" stroke-width="1.500"/></svg></button>
            </div>
            <div class="tray">
                <span class="link">链接</span>
                <span class="cpu">36%<br>CPU使用</span>
                <svg class="i" viewBox="0 0 16 16"><path d="M2 11l6-6 6 6" fill="none" stroke="#fff" stroke-width="1.300"/></svg>
                <svg class="i" viewBox="0 0 16 16"><path d="M5.500 5.500h9v7h-9z" fill="none" stroke="#fff"/><path d="M7 7h6v4H7zM15 7h1v4h-1zM0 4h4v3H0z" fill="#fff"/><path d="M1 2v2M3 2v2M2 7v3h3" fill="none" stroke="#fff"/></svg>
                <svg class="i" viewBox="0 0 16 16"><path d="M2 14C3 8 8 3 14 3M5 14c1-4 4-7 9-8M8 14c1-2 3-4 6-5" fill="none" stroke="#ccc" stroke-width="1.200"/><circle cx="12.500" cy="12.500" r="1.500" fill="#fff"/></svg>
                <svg class="i" viewBox="0 0 16 16"><path d="M1 6h2l4-3v10l-4-3H1z" fill="none" stroke="#fff"/><path d="M9 6c1 1 1 3 0 4M11 4c2 2 2 6 0 8M13 2c3 3 3 9 0 12" fill="none" stroke="#ccc"/></svg>
                <svg class="kb" viewBox="0 0 24 16"><path d="M1 2.500h22v11H1z" fill="none" stroke="#fff"/><path d="M3 5.500h18M3 8h18" stroke="#fff" stroke-dasharray="2 1"/><path d="M6 11h12" stroke="#fff"/></svg>
                <b>中</b>
                <svg class="i"><use href="#sogou"/></svg>
                <time class="clock">15:48<br>2018/2/12</time>
                <div class="notice"><svg class="i" viewBox="0 0 16 16"><path d="M0 1h16v11H6l-3 3v-3H0z" fill="#fff"/><path d="M3 4h10M3 6.500h10M3 9h7" stroke="#000"/></svg><em>20</em></div>
            </div>
        </div>
    </div>
</body>
</html>
```
FILE: styles.css
```css
* {
    box-sizing: border-box;
}

body {
    margin: 0;
    background: #f0f0f0;
    color: #000;
    font-family: "Noto Sans CJK SC", "Open Sans", sans-serif;
    font-size: 12px;
    line-height: 16px;
    overflow: hidden;
}

button, input, select {
    font: inherit;
    color: inherit;
    border: 0;
    border-radius: 0;
    background: none;
    padding: 0;
    margin: 0;
}

a {
    color: inherit;
    text-decoration: none;
}

svg {
    display: block;
    flex: none;
}

.sprite {
    position: absolute;
    width: 0;
    height: 0;
}

.i {
    width: 16px;
    height: 16px;
}

.app {
    height: 100vh;
    display: flex;
    flex-direction: column;
}

/* 标题栏 */
.titlebar {
    position: relative;
    flex: none;
    height: 23px;
    padding-left: 2px;
    display: flex;
    align-items: center;
    gap: 5px;
    background: #fff;
}

.titlebar h1 {
    flex: 1;
    margin: 0;
    font-family: Inter, "Noto Sans CJK SC", sans-serif;
    font-size: 12px;
    font-weight: 400;
    white-space: nowrap;
}

.win-buttons {
    display: flex;
}

.win-buttons button {
    width: 46px;
    display: flex;
    justify-content: center;
}

.ball {
    position: absolute;
    left: 836px;
    top: -29px;
    width: 48px;
    height: 48px;
    padding-top: 26px;
    border: 2px solid #35a853;
    border-radius: 50%;
    background: #45c463;
    box-shadow: 0 1px 4px rgba(0, 0, 0, 0.5);
    color: #fff;
    font-weight: 700;
    text-align: center;
    z-index: 2;
}

/* 菜单 */
.menu-row {
    position: relative;
    flex: none;
    height: 30px;
    display: flex;
    align-items: center;
    white-space: nowrap;
}

.menu {
    display: flex;
    gap: 11px;
    padding-left: 7px;
}

.account {
    flex: 1;
    margin-left: 1px;
    padding-left: 29px;
}

.tip {
    color: #00635c;
}

.avatar {
    margin: 0 46px;
}

.user {
    margin-right: 4px;
}

/* 输入法浮条 */
.ime {
    position: absolute;
    right: 167px;
    top: -5px;
    width: 200px;
    height: 24px;
    padding: 0 2px 0 28px;
    display: flex;
    align-items: center;
    justify-content: space-between;
    background: #fff;
    border: 1px solid #aebfd2;
    color: #1a73cc;
    font-size: 14px;
}

.ime-logo {
    position: absolute;
    left: -8px;
    top: -3px;
    width: 28px;
    height: 28px;
}

/* 工具栏 */
.bar {
    height: 27px;
    display: flex;
    align-items: center;
    background: linear-gradient(#fcfcfc, #f0f0f0);
}

.tb {
    height: 23px;
    padding: 0 4px;
    display: flex;
    align-items: center;
    gap: 4px;
    white-space: nowrap;
}

.tb:disabled {
    color: #8a8a8a;
}

.tb.on {
    padding: 0 3px;
    border: 1px solid #0078d7;
    background: #dcebf7;
}

.tb.white {
    background: #fff;
}

.near {
    gap: 2px;
}

.caret {
    width: 7px;
    height: 3px;
    background: #000;
    clip-path: polygon(0 0, 6px 0, 3px 3px);
}

.sep {
    width: 1px;
    height: 15px;
    margin: 0 2px 0 1px;
    background: #b0b0b0;
}

.handle {
    width: 2px;
    height: 15px;
    margin: 0 3px 0 4px;
    background: repeating-linear-gradient(#b8b8b8 0 2px, transparent 2px 4px);
}

.more {
    align-self: flex-start;
    margin-left: auto;
    padding-right: 3px;
    font-size: 16px;
    line-height: 16px;
}

.top-tools {
    flex: none;
    height: 30px;
    display: flex;
}

.std {
    width: 149px;
    padding-left: 2px;
}

.calc {
    width: 548px;
    margin-left: 4px;
}

.calc .tb {
    padding-right: 3px;
}

.view {
    flex: 1;
    margin-left: 3px;
}

.combo {
    width: 70px;
    height: 23px;
    margin-right: 2px;
    padding: 0 2px;
    appearance: none;
    background: url("data:image/svg+xml,%3Csvg xmlns='http://www.w3.org/2000/svg' width='12' height='23'%3E%3Cpath d='M0 0h12v23H0z' fill='%23f6f6f6'/%3E%3Cpath d='M3 10h6l-3 3z'/%3E%3C/svg%3E") right center no-repeat #fff;
}

.combo.small {
    width: 57px;
}

.main {
    flex: 1;
    min-height: 0;
    display: flex;
}

/* 左侧导航 */
.dock {
    width: 166px;
    padding: 1px 1px 2px 0;
    display: flex;
    flex-direction: column;
    font-family: "Liberation Serif", "Noto Sans CJK SC", serif;
}

.dock h2 {
    margin: 0 0 1px;
    height: 15px;
    display: flex;
    align-items: center;
    gap: 2px;
    background: #0054e3;
    color: #fff;
    font-size: 13px;
    font-weight: 400;
}

.dock h2 .i:first-of-type {
    margin-left: auto;
}

.module {
    flex: none;
    height: 22px;
    border: 1px solid #a0a0a0;
    border-bottom-width: 0;
    box-shadow: inset 1px 1px #fff;
    background: #f0f0f0;
}

.module:last-child {
    height: 23px;
    border-bottom-width: 1px;
}

.dock-tools {
    flex: none;
    height: 28px;
    padding: 6px 6px 0;
    display: flex;
    gap: 7px;
    border: 1px solid #a0a0a0;
    border-bottom: 0;
    background: linear-gradient(#fdfdfd, #ececec);
}

.tree, .tree ul {
    margin: 0;
    padding: 0;
    list-style: none;
}

.tree {
    flex: 1;
    min-height: 0;
    margin-left: 2px;
    padding-top: 1px;
    border: 1px solid #828790;
    background: #fff;
    overflow: hidden;
    white-space: nowrap;
}

.tree li {
    padding-left: 6px;
    line-height: 16px;
}

.tree svg {
    display: inline-block;
    vertical-align: top;
}

.tree .i {
    width: 15px;
    margin-right: 5px;
}

.tree .i.tight {
    margin-right: 0;
}

.tree .arrow {
    margin: 3px 7px 0 0;
}

.tree ul {
    margin-left: 6px;
    padding-left: 18px;
    border-left: 1px dotted #808080;
}

.tree ul li {
    height: 16px;
    padding-left: 10px;
    border-left: 1px dotted #808080;
    background: repeating-linear-gradient(90deg, #808080 0 1px, transparent 1px 2px) 0 8px / 10px 1px no-repeat;
}

.arrow {
    width: 10px;
    height: 10px;
}

.picked {
    display: inline-block;
    height: 16px;
    background: #d9d9d9;
}

.new {
    padding: 0 1px;
    display: inline-block;
    height: 10px;
    vertical-align: top;
    background: #ffdc1e;
    font: italic 700 9px/10px "Liberation Sans", sans-serif;
}

/* 右侧工作区 */
.work {
    flex: 1;
    min-width: 0;
    margin-left: 4px;
    display: flex;
    flex-direction: column;
}

.tool-row {
    flex: none;
    height: 28px;
    display: flex;
}

.tool-row.last {
    height: 29px;
    padding-top: 1px;
    gap: 3px;
}

.tool-row .bar {
    padding-right: 4px;
}

.apart {
    gap: 68px;
}

.blank {
    width: 23px;
    height: 25px;
    background: linear-gradient(90deg, #fff, #f6f6f6);
}

.scene {
    flex: 1;
    min-height: 0;
    margin-right: 1px;
    background: #000;
}

.scene svg {
    width: 100%;
    height: 100%;
}

.axis-no {
    fill: #eee;
    font-family: "Liberation Sans", sans-serif;
    font-size: 16px;
}

.snap {
    flex: none;
    height: 34px;
    padding-top: 1px;
    display: flex;
    gap: 5px;
}

.snap .tb {
    padding: 0 3px;
}

.snap .on {
    padding: 0 2px;
}

.num, .turn {
    display: flex;
    align-items: center;
    color: #808080;
    font-family: "Open Sans", "Noto Sans CJK SC", sans-serif;
    margin-right: 6px;
}

.turn {
    color: #000;
}

.num input {
    width: 58px;
    height: 23px;
    margin-left: 3px;
    padding-right: 18px;
    border: 1px solid #707070;
    color: #808080;
    text-align: right;
}

.num input.wide {
    width: 68px;
    margin-left: 0;
}

.spin {
    width: 7px;
    height: 15px;
    margin: 0 6px 0 -13px;
    background: #555;
    clip-path: polygon(0 4px, 3px 0, 6px 4px, 0 4px, 0 11px, 6px 11px, 3px 15px, 0 11px);
}

.turn input {
    appearance: none;
    width: 12px;
    height: 12px;
    margin-right: 8px;
    border: 1px solid #707070;
}

/* 钢筋表 */
.rebar {
    flex: none;
    height: 200px;
    display: flex;
}

.side-grip {
    width: 12px;
    padding: 0 1px 2px;
    background: radial-gradient(#b4b4b4 1px, transparent 1px) 0 0 / 5px 5px;
}

.close-x {
    width: 10px;
    height: 12px;
    background: #f0f0f0;
}

.rebar-body {
    flex: 1;
    min-width: 0;
    margin-bottom: 2px;
    display: flex;
    flex-direction: column;
    border: 1px solid #a0a0a0;
    border-width: 0 2px 1px 1px;
    background: #fff;
}

.rebar-tools {
    flex: none;
    height: 27px;
    padding-left: 3px;
    display: flex;
    align-items: center;
    border-bottom: 1px solid #a0a0a0;
    background: linear-gradient(#fcfcfc, #f0f0f0);
}

.rebar-tools .tb {
    padding-right: 3px;
}

.total {
    margin-left: 5px;
}

.grid {
    flex: 1;
    overflow: hidden;
    font-family: "Liberation Serif", "Noto Sans CJK SC", serif;
}

table {
    width: 1207px;
    table-layout: fixed;
    border-collapse: collapse;
}

th, td {
    height: 20px;
    padding: 0;
    border: 1px solid #b8b8b8;
    border-top: 0;
    border-left: 0;
    font-weight: 400;
    white-space: nowrap;
}

thead th {
    background: linear-gradient(#fff, #f0f0f0);
}

thead .cur {
    background: linear-gradient(#ffd594, #f0bc60);
    color: #5c0a4c;
}

tbody th {
    background: #ffd58e;
    color: #5c0a4c;
    font-weight: 700;
}

tbody .cur {
    background: #d9eaf8;
    box-shadow: inset 1px 0 #000;
}

.w33 { width: 33px; }
.w36 { width: 36px; }
.w38 { width: 38px; }
.w50 { width: 50px; }
.w56 { width: 56px; }
.w61 { width: 61px; }
.w71 { width: 71px; }
.w73 { width: 73px; }
.w156 { width: 156px; }
.w166 { width: 166px; }
.w201 { width: 201px; }

.hscroll {
    flex: none;
    height: 17px;
    padding: 0 4px;
    display: flex;
    align-items: center;
    gap: 4px;
    background: #f0f0f0;
}

.track {
    flex: 1;
}

.thumb {
    width: 72%;
    height: 15px;
    background: #cdcdcd;
}

/* 状态栏 */
.status {
    flex: none;
    height: 21px;
    padding-top: 1px;
    display: flex;
    gap: 3px;
    font-family: "Liberation Serif", "Noto Sans CJK SC", serif;
}

.status span {
    padding: 0 1px;
    border: 1px solid #d4d4d4;
    background: linear-gradient(#fff, #f0f0f0);
    line-height: 18px;
    white-space: nowrap;
}

.status .pos { width: 147px; }
.status .floor { width: 77px; }
.status .base { width: 97px; }
.status .count { width: 47px; }
.status .msg { flex: 1; }
.status .fps { width: 70px; }

/* 任务栏 */
.taskbar {
    flex: none;
    height: 40px;
    display: flex;
    background: #000d10;
    color: #fff;
}

.start {
    width: 48px;
    display: flex;
    align-items: center;
    justify-content: center;
    background: #000;
}

.search {
    width: 344px;
    padding: 0 13px 0 9px;
    display: flex;
    align-items: center;
    gap: 5px;
    background: #333;
}

.cortana {
    width: 22px;
    height: 22px;
}

.search input {
    flex: 1;
    min-width: 0;
    font-size: 14px;
    line-height: 20px;
}

.search input::placeholder {
    color: #999;
    opacity: 1;
}

.apps {
    display: flex;
    gap: 1px;
}

.apps button {
    width: 49px;
    display: flex;
    align-items: center;
    justify-content: center;
}

.apps .run {
    background: linear-gradient(#76b9ed, #76b9ed) center bottom / 40px 2px no-repeat;
}

.apps .active {
    background: linear-gradient(#76b9ed, #76b9ed) center bottom / 49px 2px no-repeat #333d40;
}

.a {
    width: 24px;
    height: 24px;
}

.grey { color: #e6e6e6; }
.blue { color: #0078d7; }
.ie { color: #3fa9f0; }
.green { color: #fff; }
.gold { color: #f6cf2a; }

.tray {
    margin-left: auto;
    padding-right: 14px;
    display: flex;
    align-items: center;
    gap: 8px;
    white-space: nowrap;
}

.tray b {
    margin-right: 5px;
    font-size: 13px;
}

.kb {
    width: 24px;
    height: 16px;
}

.link {
    margin-right: 11px;
}

.cpu, .clock {
    text-align: center;
    line-height: 18px;
    font-family: "Open Sans", "Noto Sans CJK SC", sans-serif;
}

.cpu {
    margin-right: 9px;
}

.clock {
    margin: 0 10px 0 8px;
}

.notice {
    position: relative;
    width: 26px;
    height: 18px;
}

.notice em {
    position: absolute;
    left: 5px;
    top: 6px;
    width: 21px;
    height: 17px;
    border: 1px solid #888;
    border-radius: 8px;
    background: #333;
    font-style: normal;
    font-weight: 700;
    line-height: 15px;
    text-align: center;
}
```
